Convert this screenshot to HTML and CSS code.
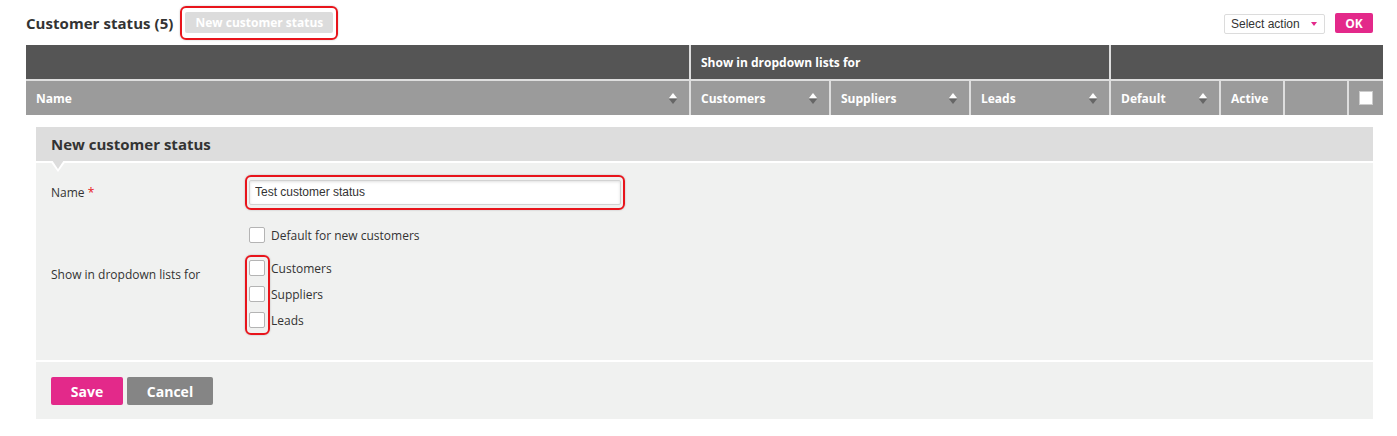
FILE: index.html
```html
<!DOCTYPE html>
<html lang="en">
<head>
<meta charset="utf-8">
<title>Customer status</title>
<link rel="stylesheet" href="styles.css">
</head>
<body>
<div class="page">
  <div class="topbar">
    <h1 class="title">Customer status (5)</h1>
    <span class="mark mark-btn"><button class="btn-new" type="button">New customer status</button></span>
    <div class="spacer"></div>
    <div class="select"><span>Select action</span><span class="caret"></span></div>
    <button class="btn-ok" type="button">OK</button>
  </div>

  <div class="grid">
    <div class="gh gh-top"></div>
    <div class="gh gh-top span3">Show in dropdown lists for</div>
    <div class="gh gh-top span4"></div>

    <div class="gh gh-sub"><span>Name</span><i class="sort"></i></div>
    <div class="gh gh-sub"><span>Customers</span><i class="sort"></i></div>
    <div class="gh gh-sub"><span>Suppliers</span><i class="sort"></i></div>
    <div class="gh gh-sub"><span>Leads</span><i class="sort"></i></div>
    <div class="gh gh-sub"><span>Default</span><i class="sort"></i></div>
    <div class="gh gh-sub"><span>Active</span></div>
    <div class="gh gh-sub"></div>
    <div class="gh gh-sub gh-check"><span class="hbox"></span></div>
  </div>

  <div class="panel">
    <div class="panel-head">New customer status</div>
    <div class="panel-body">
      <div class="row row-name">
        <label class="lbl">Name <span class="req">*</span></label>
        <span class="mark mark-input"><input class="text" type="text" value="Test customer status"></span>
      </div>
      <div class="row row-default">
        <div class="lbl"></div>
        <label class="chk"><span class="box"></span>Default for new customers</label>
      </div>
      <div class="row row-lists">
        <div class="lbl lbl-lists">Show in dropdown lists for</div>
        <div class="checks">
          <label class="chk"><span class="box"></span>Customers</label>
          <label class="chk"><span class="box"></span>Suppliers</label>
          <label class="chk"><span class="box"></span>Leads</label>
          <span class="mark mark-checks"></span>
        </div>
      </div>
    </div>
    <div class="panel-foot">
      <button class="btn-save" type="button">Save</button>
      <button class="btn-cancel" type="button">Cancel</button>
    </div>
  </div>
</div>
</body>
</html>
```

FILE: styles.css
```css
* { box-sizing: border-box; }
body {
  margin: 0;
  font-family: "Open Sans", "Noto Sans", sans-serif;
  color: #333;
  background: #fff;
}
.page { padding: 0 14px 0 26px; }

.topbar {
  height: 45px;
  display: flex;
  align-items: center;
  padding-right: 10px;
}
.title {
  margin: 0;
  font-size: 15px;
  font-weight: 700;
  color: #333;
  letter-spacing: 0.05px;
}
.mark {
  border: 2px solid #e8141b;
  border-radius: 6px;
  box-shadow: 0 0 2px rgba(0,0,0,0.25);
}
.mark-btn {
  margin-left: 7px;
  display: inline-flex;
  padding: 4px 3px;
  height: 34px;
  width: 158px;
  justify-content: center;
  align-items: center;
}
.btn-new {
  border: 0;
  background: #dcdcdc;
  color: #fff;
  font-family: "Open Sans", sans-serif;
  font-weight: 700;
  font-size: 12px;
  height: 21px;
  width: 148px;
  border-radius: 2px;
  padding: 0;
}
.spacer { flex: 1; }
.select {
  width: 101px;
  height: 20px;
  border: 1px solid #dcdcdc;
  border-radius: 2px;
  display: flex;
  align-items: center;
  justify-content: space-between;
  padding: 0 7px 0 6px;
  font-family: "Liberation Sans", Arial, sans-serif;
  font-size: 12px;
  color: #333;
  margin-top: 3px;
}
.caret {
  width: 0; height: 0;
  border-left: 3px solid transparent;
  border-right: 3px solid transparent;
  border-top: 4px solid #e3298a;
}
.btn-ok {
  margin-left: 10px;
  width: 38px;
  height: 20px;
  border: 0;
  border-radius: 2px;
  background: #e3298a;
  color: #fff;
  font-family: "Open Sans", sans-serif;
  font-weight: 700;
  font-size: 12px;
  padding: 0;
  margin-top: 1px;
}

.grid {
  display: grid;
  grid-template-columns: 663px 138px 138px 138px 108px 62px 62px 34px;
  grid-template-rows: 34px 34px;
  gap: 2px;
  background: #dedede;
}
.gh {
  display: flex;
  align-items: center;
  padding: 0 12px 0 10px;
  color: #fff;
  font-weight: 700;
  font-size: 12px;
}
.gh-top { background: #555; }
.span3 { grid-column: span 3; }
.span4 { grid-column: span 4; }
.gh-sub { background: #9b9b9b; justify-content: space-between; }
.sort {
  display: flex;
  flex-direction: column;
  gap: 1px;
}
.sort::before, .sort::after {
  content: "";
  width: 0; height: 0;
  border-left: 4px solid transparent;
  border-right: 4px solid transparent;
}
.sort::before { border-bottom: 5px solid #fff; }
.sort::after { border-top: 5px solid #666; }
.gh-check { justify-content: center; padding: 0; }
.hbox {
  width: 14px; height: 14px;
  background: #fff;
  border: 1px solid #ccc;
}

.panel {
  margin: 12px 10px 0 10px;
  background: #fff;
}
.panel-head {
  position: relative;
  height: 34px;
  background: #dddddd;
  font-size: 15px;
  font-weight: 700;
  color: #333;
  display: flex;
  align-items: center;
  padding-left: 15px;
}
.panel-head::before {
  content: "";
  position: absolute;
  left: 14px;
  top: 34px;
  border-left: 8px solid transparent;
  border-right: 8px solid transparent;
  border-top: 11px solid #fff;
  z-index: 1;
}
.panel-head::after {
  content: "";
  position: absolute;
  left: 16px;
  top: 33px;
  border-left: 6px solid transparent;
  border-right: 6px solid transparent;
  border-top: 9px solid #dddddd;
  z-index: 2;
}
.panel-body {
  margin-top: 2px;
  background: #f0f1f0;
  height: 197px;
  padding: 15px 15px 0 15px;
}
.row { display: flex; }
.lbl {
  width: 198px;
  flex: none;
  font-size: 12px;
  color: #333;
}
.row-name { align-items: center; height: 28px; }
.req { color: #e8141b; }
.mark-input {
  display: inline-flex;
  margin-left: -4px;
  padding: 3px 2px;
  border-radius: 6px;
}
.text {
  width: 372px;
  height: 25px;
  border: 1px solid #d2d2d2;
  border-radius: 2px;
  background: #fff;
  box-shadow: inset 0 1px 3px rgba(0,0,0,0.12);
  font-family: "Liberation Sans", Arial, sans-serif;
  font-size: 12px;
  color: #333;
  padding: 0 5px;
  outline: none;
}
.row-default { margin-top: 21px; }
.chk {
  display: flex;
  align-items: center;
  height: 16px;
  font-size: 12px;
  color: #333;
}
.box {
  width: 16px;
  height: 16px;
  background: #fff;
  border: 1px solid #b4b4b4;
  border-radius: 2px;
  margin-right: 6px;
  flex: none;
}
.row-lists { margin-top: 17px; }
.lbl-lists { padding-top: 6px; }
.checks {
  position: relative;
  display: flex;
  flex-direction: column;
  gap: 10px;
}
.mark-checks {
  position: absolute;
  left: -4px;
  top: -5px;
  width: 25px;
  height: 80px;
}
.panel-foot {
  margin-top: 2px;
  background: #f0f1f0;
  height: 57px;
  padding: 15px 15px 0 15px;
  display: flex;
  gap: 4px;
  align-items: flex-start;
}
.btn-save, .btn-cancel {
  height: 28px;
  border: 0;
  border-radius: 2px;
  color: #fff;
  font-family: "Open Sans", sans-serif;
  font-weight: 700;
  font-size: 14px;
  padding: 0;
}
.btn-save { width: 72px; background: #e3298a; }
.btn-cancel { width: 86px; background: #858585; }
```
